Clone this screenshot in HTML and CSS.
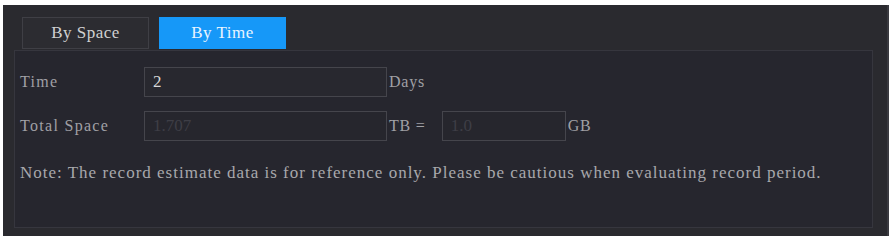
FILE: index.html
```html
<!DOCTYPE html>
<html lang="en">
<head>
    <meta charset="UTF-8">
    <title>Record Estimate</title>
    <link rel="stylesheet" href="styles.css">
</head>
<body>
    <div class="panel">
        <div class="tabs">
            <div class="tab">By Space</div>
            <div class="tab active">By Time</div>
        </div>
        <div class="content">
            <div class="row">
                <span class="label">Time</span>
                <input type="text" class="field wide" value="2">
                <span class="unit">Days</span>
            </div>
            <div class="row">
                <span class="label">Total Space</span>
                <input type="text" class="field wide" value="1.707" disabled>
                <span class="unit tb">TB =</span>
                <input type="text" class="field narrow" value="1.0" disabled>
                <span class="unit">GB</span>
            </div>
            <p class="note">Note: The record estimate data is for reference only. Please be cautious when evaluating record period.</p>
        </div>
    </div>
</body>
</html>
```

FILE: styles.css
```css
body {
    margin: 0;
    background-color: #ffffff;
    font-family: "Liberation Serif", "DejaVu Serif", serif;
}
.panel {
    margin: 5px 3px 4px 3px;
    height: 231px;
    box-sizing: border-box;
    background-color: #2a2a2f;
    padding: 12px 14px 8px 11px;
    border-right: 2px solid #3a3a40;
}
.tabs {
    display: flex;
    gap: 10px;
    padding-left: 8px;
    height: 32px;
}
.tab {
    width: 127px;
    height: 32px;
    box-sizing: border-box;
    border: 1px solid #3f3f45;
    background-color: #2c2c31;
    color: #d0d0d0;
    font-size: 17px;
    letter-spacing: 0.5px;
    display: flex;
    align-items: center;
    justify-content: center;
}
.tab.active {
    background-color: #1698f8;
    border-color: #1698f8;
    color: #e8f4ff;
}
.content {
    margin-top: 1px;
    height: 178px;
    box-sizing: border-box;
    background-color: #26262e;
    border: 1px solid #36363e;
    padding: 15px 0 0 5px;
}
.row {
    display: flex;
    align-items: center;
    height: 32px;
    margin-bottom: 12px;
}
.label {
    width: 124px;
    color: #a0a0a5;
    font-size: 16px;
    letter-spacing: 1.3px;
}
.field {
    height: 30px;
    box-sizing: border-box;
    background-color: #28282f;
    border: 1px solid #45454c;
    color: #d8d8d8;
    font-family: inherit;
    font-size: 17px;
    padding: 0 8px;
    outline: none;
}
.field:disabled {
    color: #3e3e46;
    background-color: #26262d;
}
.wide {
    width: 243px;
}
.narrow {
    width: 124px;
}
.unit {
    color: #a0a0a5;
    font-size: 16px;
    letter-spacing: 0.8px;
    padding: 0 12px 0 2px;
}
.unit.tb {
    padding-right: 16px;
}
.note {
    margin: 21px 0 0 0;
    color: #a8a8ac;
    font-size: 17px;
    letter-spacing: 1px;
}
```
